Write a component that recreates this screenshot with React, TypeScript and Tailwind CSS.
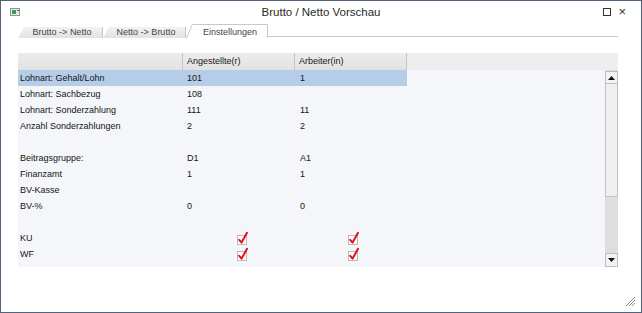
import React from "react";

type Row = { l: string; a?: string; b?: string; sel?: boolean; check?: "on" | "off" };

const rows: Row[] = [
  { l: "Lohnart: Gehalt/Lohn", a: "101", b: "1", sel: true },
  { l: "Lohnart: Sachbezug", a: "108", b: "" },
  { l: "Lohnart: Sonderzahlung", a: "111", b: "11" },
  { l: "Anzahl Sonderzahlungen", a: "2", b: "2" },
  { l: "" },
  { l: "Beitragsgruppe:", a: "D1", b: "A1" },
  { l: "Finanzamt", a: "1", b: "1" },
  { l: "BV-Kasse" },
  { l: "BV-%", a: "0", b: "0" },
  { l: "" },
  { l: "KU", check: "on" },
  { l: "WF", check: "on" },
  { l: "", check: "off" },
];

function Check({ on }: { on: boolean }) {
  return (
    <svg width="12" height="14" viewBox="0 0 12 14" className="block">
      <rect x="0.5" y="4.5" width="9" height="9" fill="#ffffff" stroke="#b9b9b9" />
      {on && (
        <path d="M2.2 8.8 L4.6 11.6 L10 1.8" fill="none" stroke="#e2101e" strokeWidth="2" strokeLinecap="round" strokeLinejoin="round" />
      )}
    </svg>
  );
}

function Arrow({ up }: { up: boolean }) {
  return (
    <svg width="7" height="4" viewBox="0 0 7 4" className="block">
      <path d={up ? "M0 4 L3.5 0 L7 4 Z" : "M0 0 L3.5 4 L7 0 Z"} fill="#111" />
    </svg>
  );
}

export default function App() {
  const font = { fontFamily: '"Liberation Sans", Arial, sans-serif' };
  return (
    <div
      className="w-[642px] h-[313px] bg-white border border-[#52627c] flex flex-col overflow-hidden box-border"
      style={font}
    >
      {/* title bar */}
      <div className="h-[22px] shrink-0 grid grid-cols-[1fr_auto_1fr] items-center">
        <div className="pl-[9px] flex items-center">
          <svg width="11" height="9" viewBox="0 0 11 9" className="block">
            <rect x="0.5" y="0.5" width="9" height="7" fill="#e8ece8" stroke="#8a9a90" />
            <rect x="2" y="2" width="4" height="4" fill="#3a9a5a" />
            <rect x="7" y="2" width="2" height="1" fill="#556" />
          </svg>
        </div>
        <div className="text-[11.5px] text-[#2a2a2a] leading-none pt-[1px]">Brutto / Netto Vorschau</div>
        <div className="flex justify-end items-center gap-[7px] pr-[15px]">
          <div className="w-[8px] h-[8px] border border-[#333]" />
          <div className="text-[13px] leading-none text-[#333] -mt-[2px]">×</div>
        </div>
      </div>

      {/* tabs */}
      <div className="h-[15px] shrink-0 flex items-end pl-[17px] pr-[23px] text-[9px] text-[#444]">
        <div className="w-[85px] h-[11px] flex items-center justify-center bg-gradient-to-b from-[#f2f2f2] to-[#e2e2e2] border-r border-[#c4c4c4] [clip-path:polygon(6px_0,100%_0,100%_100%,0_100%)] pl-[4px] pt-[1px]">
          Brutto -&gt; Netto
        </div>
        <div className="w-[83px] h-[11px] flex items-center justify-center bg-gradient-to-b from-[#f2f2f2] to-[#e2e2e2] border-r border-[#c4c4c4] [clip-path:polygon(6px_0,100%_0,100%_100%,0_100%)] pl-[4px] pt-[1px]">
          Netto -&gt; Brutto
        </div>
        <div className="relative w-[82px] h-[14px] flex items-center justify-center bg-white pl-[6px] pt-[3px]">
          <svg width="82" height="14" viewBox="0 0 82 14" className="absolute left-0 top-0">
            <path d="M0.5 14 L6.5 0.5 L81.5 0.5 L81.5 14" fill="none" stroke="#c8c8c8" />
          </svg>
          <span className="relative">Einstellungen</span>
        </div>
        <div className="flex-1 h-[1px] mb-[1px] bg-[#c8c8c8]" />
      </div>

      {/* grid */}
      <div className="ml-[17px] mt-[15px] w-[600px] shrink-0 flex flex-col text-[9px] text-[#151515]">
        <div className="h-[17px] flex bg-[#eeeeee]">
          <div className="w-[165px] h-full bg-gradient-to-b from-[#ececec] to-[#e2e2e2] border-r border-[#c6c6c6]" />
          <div className="w-[112px] h-full bg-gradient-to-b from-[#ececec] to-[#e2e2e2] border-r border-[#c6c6c6] flex items-center pl-[4px] pt-[1px]">
            Angestellte(r)
          </div>
          <div className="w-[112px] h-full bg-gradient-to-b from-[#ececec] to-[#e2e2e2] border-r border-[#c6c6c6] flex items-center pl-[4px] pt-[1px]">
            Arbeiter(in)
          </div>
          <div className="flex-1" />
        </div>
        <div className="h-[197px] flex bg-[#f4f6fa]">
          <div className="flex-1 overflow-hidden flex flex-col">
            {rows.map((r, i) => (
              <div key={i} className={`h-[16px] shrink-0 flex items-center w-[389px] ${r.sel ? "bg-[#b5cde9]" : ""}`}>
                {r.check ? (
                  <>
                    <div className="w-[165px] pl-[2px] pt-[2px]">{r.l}</div>
                    <div className="w-[112px] pl-[54px]"><Check on={r.check === "on"} /></div>
                    <div className="w-[112px] pl-[53px]"><Check on={r.check === "on"} /></div>
                  </>
                ) : (
                  <>
                    <div className="w-[165px] pl-[2px] pt-[2px]">{r.l}</div>
                    <div className="w-[112px] pl-[4px] pt-[2px]">{r.a}</div>
                    <div className="w-[112px] pl-[5px] pt-[2px]">{r.b}</div>
                  </>
                )}
              </div>
            ))}
          </div>
          <div className="w-[13px] h-full flex flex-col bg-[#dedede]">
            <div className="h-[13px] mt-[1px] border border-[#bdbdbd] bg-[#f3f3f3] flex items-center justify-center">
              <Arrow up />
            </div>
            <div className="h-[113px] border border-t-0 border-[#c3c3c3] bg-[#efefef]" />
            <div className="flex-1" />
            <div className="h-[14px] border border-[#bdbdbd] bg-[#f3f3f3] flex items-center justify-center">
              <Arrow up={false} />
            </div>
          </div>
        </div>
      </div>

      {/* bottom */}
      <div className="flex-1 flex items-end justify-end pr-[5px] pb-[5px]">
        <svg width="12" height="12" viewBox="0 0 12 12" className="block">
          <path d="M11 2 L2 11 M11 5 L5 11 M11 8 L8 11" stroke="#8a8a8a" strokeWidth="1" />
        </svg>
      </div>
    </div>
  );
}
